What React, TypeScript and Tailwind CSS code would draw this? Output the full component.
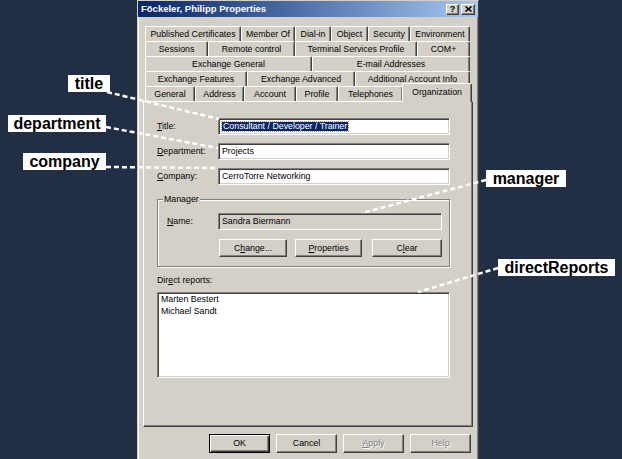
import React from "react";

const ROWS = [
  [
    { label: "Published Certificates", w: "w-[96px]" },
    { label: "Member Of", w: "w-[54px]" },
    { label: "Dial-in", w: "w-[36px]" },
    { label: "Object", w: "w-[37px]" },
    { label: "Security", w: "w-[42px]" },
    { label: "Environment", w: "w-[60px]" },
  ],
  [
    { label: "Sessions", w: "w-[63px]" },
    { label: "Remote control", w: "w-[87px]" },
    { label: "Terminal Services Profile", w: "w-[122px]" },
    { label: "COM+", w: "w-[53px]" },
  ],
  [
    { label: "Exchange General", w: "w-[167px]" },
    { label: "E-mail Addresses", w: "w-[158px]" },
  ],
  [
    { label: "Exchange Features", w: "w-[102px]" },
    { label: "Exchange Advanced", w: "w-[108px]" },
    { label: "Additional Account Info", w: "w-[115px]" },
  ],
];

const LAST_ROW = [
  { label: "General", w: "w-[50px]" },
  { label: "Address", w: "w-[49px]" },
  { label: "Account", w: "w-[52px]" },
  { label: "Profile", w: "w-[42px]" },
  { label: "Telephones", w: "w-[65px]" },
];

const tabCls =
  "h-[15px] flex items-center justify-center pt-[1px] border-t border-l border-white border-r border-r-[#404040] rounded-t-[2px] shadow-[inset_-1px_0_#808080] bg-[#d4d0c8] whitespace-nowrap";
const raised =
  "bg-[#d4d0c8] border border-white border-r-[#404040] border-b-[#404040] shadow-[inset_-1px_-1px_#808080]";
const sunken =
  "border border-[#808080] border-r-white border-b-white shadow-[inset_1px_1px_#404040,inset_-1px_-1px_#d4d0c8]";

function Key({ c }: { c: string }) {
  return <span className="underline underline-offset-1">{c}</span>;
}

function Field({ label, children }: { label: React.ReactNode; children: React.ReactNode }) {
  return (
    <div className="flex items-center h-[17px]">
      <div className="w-[61px]">{label}</div>
      <div className={`w-[232px] h-[17px] bg-white flex items-center pl-[3px] ${sunken}`}>{children}</div>
    </div>
  );
}

function Btn({ w, children }: { w: string; children: React.ReactNode }) {
  return <div className={`${w} h-[18px] flex items-center justify-center ${raised}`}>{children}</div>;
}

function Note({ text, cls }: { text: string; cls: string }) {
  return (
    <div
      className={`absolute h-[17px] bg-white text-black font-bold text-[16px] leading-[17px] text-center ${cls}`}
    >
      {text}
    </div>
  );
}

export default function App() {
  return (
    <div className="relative w-[622px] h-[459px] overflow-hidden bg-[#222e44] font-['Liberation_Sans',Arial,sans-serif] text-[8.8px] leading-none text-black">
      {/* dialog window */}
      <div className="ml-[137px] w-[342px] h-[480px] bg-[#d4d0c8] border border-[#d4d0c8] border-r-[#404040] border-b-[#404040] shadow-[inset_1px_1px_#fff,inset_-1px_-1px_#808080]">
        <div className="h-[16px] flex items-center justify-between pl-[3px] pr-[3px] bg-linear-to-r from-[#0a246a] to-[#a6caf0]">
          <span className="text-white font-bold text-[9.5px]">Föckeler, Philipp Properties</span>
          <div className="flex gap-[2px]">
            <div className={`w-[13px] h-[11px] flex items-center justify-center font-bold text-[9px] ${raised}`}>?</div>
            <div className={`w-[14px] h-[11px] flex items-center justify-center ${raised}`}>
              <svg width="7" height="6" viewBox="0 0 7 6">
                <path d="M0.5 0.5 L6.5 5.5 M6.5 0.5 L0.5 5.5" stroke="#000" strokeWidth="1.6" />
              </svg>
            </div>
          </div>
        </div>

        {/* tab rows */}
        <div className="mt-[9px] pl-[7px]">
          {ROWS.map((row, i) => (
            <div key={i} className="flex h-[15px]">
              {row.map((t) => (
                <div key={t.label} className={`${tabCls} ${t.w}`}>
                  {t.label}
                </div>
              ))}
            </div>
          ))}
          <div className="flex items-end h-[15px]">
            {LAST_ROW.map((t) => (
              <div key={t.label} className={`${tabCls} ${t.w}`}>
                {t.label}
              </div>
            ))}
            <div className="relative z-10 -ml-[1px] -mb-[1px] w-[70px] h-[19px] flex justify-center pt-[4px] border-t border-l border-white border-r border-r-[#404040] rounded-t-[2px] shadow-[inset_-1px_0_#808080] bg-[#d4d0c8]">
              Organization
            </div>
          </div>
        </div>

        {/* tab panel */}
        <div className={`ml-[5px] w-[330px] h-[326px] pl-[13px] pt-[16px] ${raised}`}>
          <div className="flex flex-col gap-[8px]">
            <Field label={<><Key c="T" />itle:</>}>
              <span className="bg-[#0a246a] text-white outline-1 outline-dotted outline-[#a0a0a0] px-[1px]">
                Consultant / Developer / Trainer
              </span>
            </Field>
            <Field label={<><Key c="D" />epartment:</>}>Projects</Field>
            <Field label={<><Key c="C" />ompany:</>}>CerroTorre Networking</Field>
          </div>

          {/* manager group */}
          <div className="relative mt-[14px] w-[293px] h-[68px] border border-[#808080] shadow-[inset_1px_1px_#fff,1px_1px_#fff] pt-[13px] pl-[9px]">
            <span className="absolute -top-[5px] left-[5px] px-[1px] bg-[#d4d0c8]">Manager</span>
            <div className="flex items-center h-[17px]">
              <div className="w-[51px]">
                <Key c="N" />ame:
              </div>
              <div className={`w-[224px] h-[17px] flex items-center pl-[3px] bg-[#d4d0c8] ${sunken}`}>
                Sandra Biermann
              </div>
            </div>
            <div className="flex mt-[9px] ml-[52px]">
              <Btn w="w-[68px]">
                C<Key c="h" />ange...
              </Btn>
              <div className="ml-[8px]">
                <Btn w="w-[67px]">
                  <Key c="P" />roperties
                </Btn>
              </div>
              <div className="ml-[10px]">
                <Btn w="w-[70px]">
                  C<Key c="l" />ear
                </Btn>
              </div>
            </div>
          </div>

          <div className="mt-[6px] h-[14px] flex items-center">
            Dir<Key c="e" />ct reports:
          </div>
          <div className={`mt-[5px] w-[293px] h-[86px] bg-white pl-[3px] pt-0 ${sunken}`}>
            <div className="h-[12px] flex items-center">Marten Bestert</div>
            <div className="h-[12px] flex items-center">Michael Sandt</div>
          </div>
        </div>

        {/* dialog buttons */}
        <div className="flex gap-[6px] ml-[71px] mt-[7px]">
          <div className="w-[61px] h-[19px] flex items-center justify-center border border-black bg-[#d4d0c8] shadow-[inset_1px_1px_#fff,inset_-1px_-1px_#404040,inset_-2px_-2px_#808080]">
            OK
          </div>
          <div className={`w-[61px] h-[19px] flex items-center justify-center ${raised}`}>Cancel</div>
          <div className={`w-[61px] h-[19px] flex items-center justify-center text-[#808080] [text-shadow:1px_1px_0_#fff] ${raised}`}>
            <Key c="A" />pply
          </div>
          <div className={`w-[61px] h-[19px] flex items-center justify-center text-[#808080] [text-shadow:1px_1px_0_#fff] ${raised}`}>
            Help
          </div>
        </div>
      </div>

      {/* annotation lines */}
      <svg className="absolute inset-0 pointer-events-none" width="622" height="459" viewBox="0 0 622 459">
        <g stroke="#fff" strokeWidth="2.5" strokeDasharray="5 3" fill="none">
          <path d="M107 92 L219 119" />
          <path d="M106 127 L218 148" />
          <path d="M106 167 L218 168" />
          <path d="M486 180 L362 213" />
          <path d="M498 268 L418 292" />
        </g>
      </svg>

      <Note text="title" cls="left-[68px] top-[75px] w-[42px]" />
      <Note text="department" cls="left-[8px] top-[115px] w-[98px]" />
      <Note text="company" cls="left-[23px] top-[153px] w-[83px]" />
      <Note text="manager" cls="left-[486px] top-[170px] w-[80px]" />
      <Note text="directReports" cls="left-[498px] top-[259px] w-[117px]" />
    </div>
  );
}
